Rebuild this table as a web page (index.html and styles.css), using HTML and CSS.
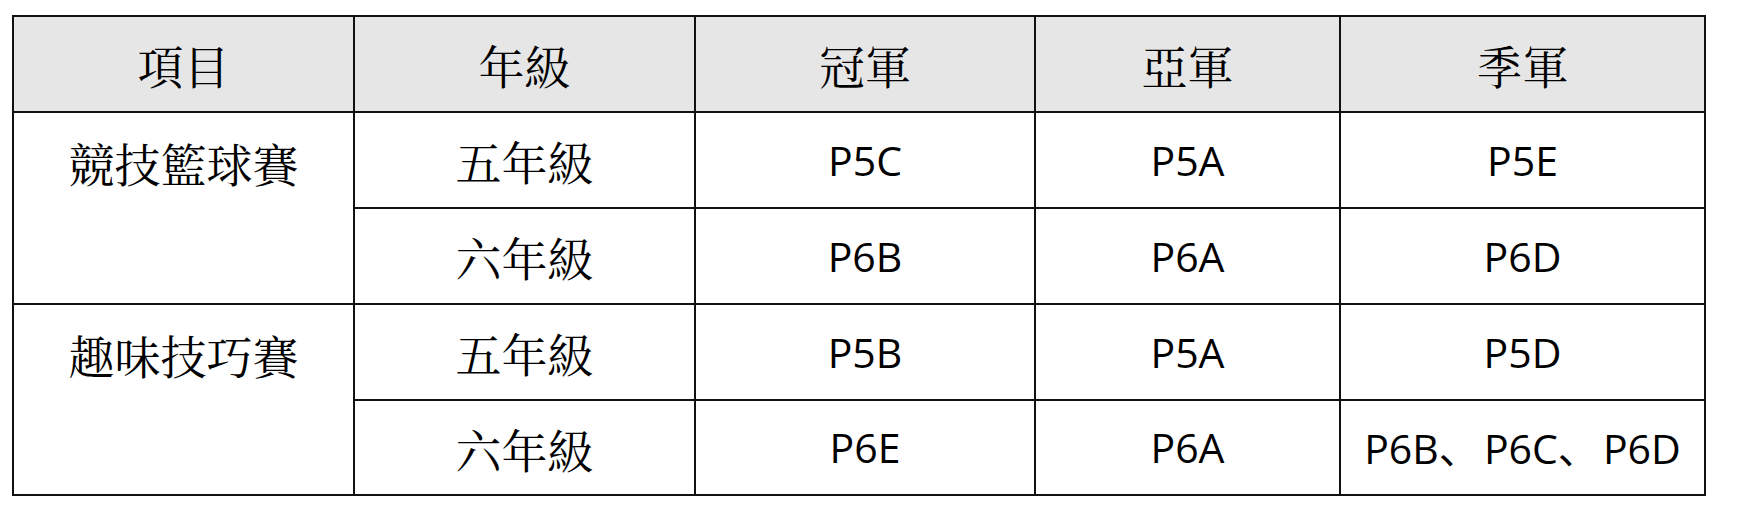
FILE: index.html
```html
<!DOCTYPE html>
<html lang="zh-Hant">
<head>
<meta charset="utf-8">
<title>比賽結果</title>
<link rel="stylesheet" href="styles.css">
</head>
<body>
<table class="results">
  <colgroup>
    <col class="c1"><col class="c2"><col class="c3"><col class="c4"><col class="c5">
  </colgroup>
  <thead>
    <tr class="head">
      <th class="zh">項目</th>
      <th class="zh">年級</th>
      <th class="zh">冠軍</th>
      <th class="zh">亞軍</th>
      <th class="zh">季軍</th>
    </tr>
  </thead>
  <tbody>
    <tr>
      <td class="zh event" rowspan="2">競技籃球賽</td>
      <td class="zh">五年級</td>
      <td class="en">P5C</td>
      <td class="en">P5A</td>
      <td class="en">P5E</td>
    </tr>
    <tr>
      <td class="zh">六年級</td>
      <td class="en">P6B</td>
      <td class="en">P6A</td>
      <td class="en">P6D</td>
    </tr>
    <tr>
      <td class="zh event" rowspan="2">趣味技巧賽</td>
      <td class="zh">五年級</td>
      <td class="en">P5B</td>
      <td class="en">P5A</td>
      <td class="en">P5D</td>
    </tr>
    <tr class="last">
      <td class="zh">六年級</td>
      <td class="en">P6E</td>
      <td class="en">P6A</td>
      <td class="en">P6B<span class="sep">、</span>P6C<span class="sep">、</span>P6D</td>
    </tr>
  </tbody>
</table>
</body>
</html>
```

FILE: styles.css
```css
html, body {
  margin: 0;
  padding: 0;
  background: #ffffff;
}

body {
  padding: 15px 0 0 12px;
}

.results {
  border-collapse: collapse;
  table-layout: fixed;
  width: 1692px;
  color: #000;
}

.c1 { width: 341px; }
.c2 { width: 341px; }
.c3 { width: 340px; }
.c4 { width: 305px; }
.c5 { width: 365px; }

.results th,
.results td {
  border: 2px solid #111;
  height: 94px;
  padding: 0;
  text-align: center;
  vertical-align: middle;
  font-weight: normal;
  white-space: nowrap;
}

.head th {
  background: #e6e6e6;
}

.results tr.last td {
  height: 93px;
}

.zh {
  font-family: "AR PL UMing TW", "Noto Serif CJK TC", "Noto Sans CJK TC", serif;
  font-size: 46px;
  line-height: 1;
}

.results td.en {
  font-family: "Open Sans", "Noto Sans CJK TC", sans-serif;
  font-size: 41px;
  font-weight: 500;
  line-height: 1;
}

.sep {
  font-family: "Noto Sans CJK SC", "Noto Sans CJK JP", sans-serif;
  font-weight: 400;
  display: inline-block;
  width: 1.1em;
  text-align: left;
}

.results td.event {
  vertical-align: top;
  padding-top: 26px;
}
```
